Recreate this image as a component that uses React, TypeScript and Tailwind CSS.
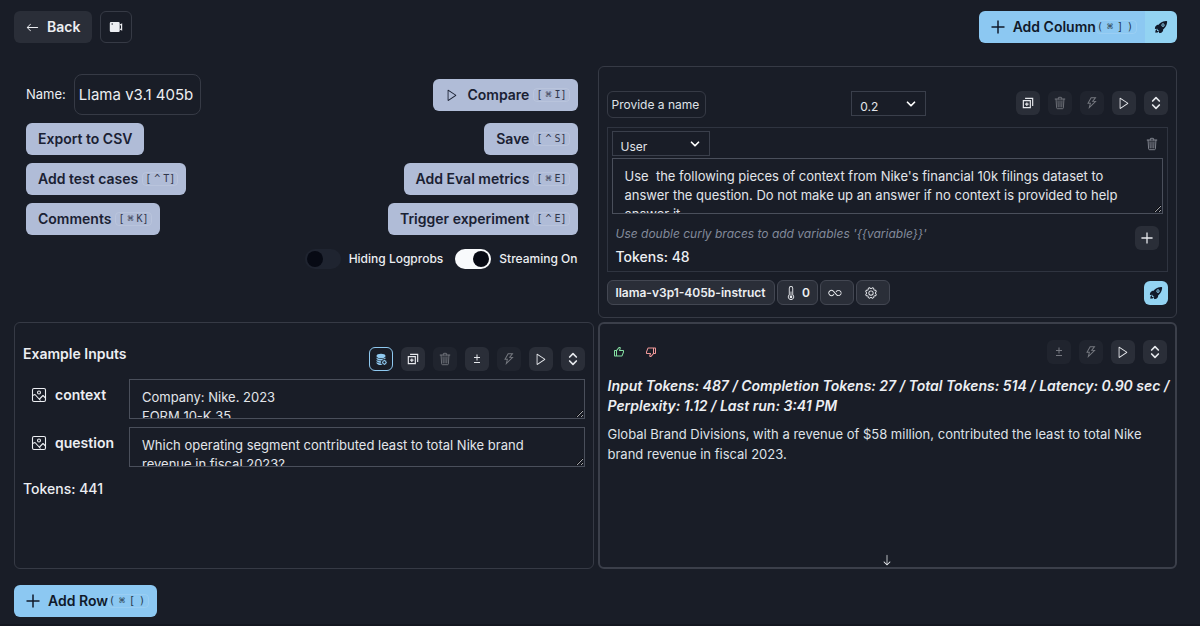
import { ReactNode } from "react";
import clsx from "clsx";

import { AiOutlineThunderbolt } from "react-icons/ai";
import { BiDislike, BiLike } from "react-icons/bi";
import { BsArrowDown, BsArrowLeft, BsDatabaseFillGear, BsThermometerHalf } from "react-icons/bs";
import { CgDuplicate } from "react-icons/cg";
import { IoRocket, IoTrashOutline } from "react-icons/io5";
import { LuChevronDown, LuChevronsUpDown } from "react-icons/lu";
import { PiGear, PiInfinity } from "react-icons/pi";
import { VscPlay } from "react-icons/vsc";

interface KbdProps {
  mod: string;
  char: string;
  parens?: boolean;
}

function Kbd({ mod, char, parens }: KbdProps) {
  return (
    <kbd
      className={clsx(
        "flex items-center rounded-sm border border-white/15 font-['DejaVu_Sans_Mono',monospace] text-[10px] leading-3 font-normal opacity-85",
        parens ? "gap-1 pr-[3px]" : "px-[2px]",
      )}
    >
      <span>{parens ? "(" : "["}</span>
      <span className={parens ? undefined : "mx-[3px]"}>{mod}</span>
      <span>{char}</span>
      <span>{parens ? ")" : "]"}</span>
    </kbd>
  );
}

interface ActionButtonProps {
  children: ReactNode;
  mod?: string;
  char?: string;
}

function ActionButton({ children, mod, char }: ActionButtonProps) {
  return (
    <button
      className={clsx(
        "flex h-8 items-center gap-1 rounded-md bg-[#b0bcd7] text-sm font-semibold text-[#1a2133]",
        mod ? "pr-2 pl-3" : "px-3",
      )}
    >
      {children}
      {mod && char && <Kbd mod={mod} char={char} />}
    </button>
  );
}

interface IconButtonProps {
  label: string;
  children: ReactNode;
  disabled?: boolean;
  className?: string;
}

function IconButton({ label, children, disabled, className }: IconButtonProps) {
  return (
    <button
      aria-label={label}
      disabled={disabled}
      className={clsx(
        "flex size-6 shrink-0 items-center justify-center rounded-md text-sm",
        className ?? "bg-[#2a2e38] text-[#e6e8ec] disabled:opacity-45",
      )}
    >
      {children}
    </button>
  );
}

function PlusIcon({ className }: { className: string }) {
  return (
    <svg viewBox="0 0 14 14" className={className} fill="none" stroke="currentColor" strokeWidth="1.5">
      <path d="M7 .5v13M.5 7h13" />
    </svg>
  );
}

function PlusMinus() {
  return (
    <svg viewBox="0 0 12 12" className="size-3" fill="none" stroke="currentColor">
      <path d="M3 4.5h6M6 1.5v6M3 9.5h6" />
    </svg>
  );
}

function TrashIcon() {
  return <IoTrashOutline className="size-[14px] fill-current/30" />;
}

function ImageIcon() {
  return (
    <svg viewBox="0 0 16 16" className="size-4 shrink-0" fill="none" stroke="currentColor" strokeWidth="1.1" strokeLinejoin="round">
      <rect x="1.5" y="1.5" width="13" height="13" rx="1.5" />
      <circle cx="8" cy="5.5" r="1.5" />
      <path d="M1.5 8.5 4 7.5 9.5 13.5M8.5 12 12 8.5l2.5 2.5" />
    </svg>
  );
}

function VideoIcon() {
  return (
    <svg viewBox="0 0 14 12" className="h-3 w-3.5" fill="currentColor">
      <path
        fillRule="evenodd"
        d="M2 1h7.5a1.2 1.2 0 0 1 1.2 1.2v7.6A1.2 1.2 0 0 1 9.5 11H2A1.2 1.2 0 0 1 .8 9.8V2.2A1.2 1.2 0 0 1 2 1Zm.5 1.6v1H4v-1Z"
      />
      <path d="m11 4 1.6-.8v5.6L11 8" fill="none" stroke="currentColor" strokeWidth="1.2" />
    </svg>
  );
}

interface SelectProps {
  label: string;
  value: string;
  className: string;
}

function Select({ label, value, className }: SelectProps) {
  return (
    <div className={clsx("relative", className)}>
      <select
        aria-label={label}
        className="block h-[25px] w-full appearance-none border border-[#3a3f4b] bg-transparent pt-[6px] pl-2 text-xs text-[#e2e5ea]"
      >
        <option>{value}</option>
      </select>
      <LuChevronDown className="pointer-events-none absolute top-[6px] right-2 size-[14px] stroke-3 text-white" />
    </div>
  );
}

interface ToggleProps {
  label: string;
  defaultChecked?: boolean;
}

function Toggle({ label, defaultChecked }: ToggleProps) {
  return (
    <label className="flex items-center gap-2 text-xs font-medium text-[#eceef2]">
      <input
        type="checkbox"
        role="switch"
        defaultChecked={defaultChecked}
        className="flex h-5 w-9 appearance-none items-center rounded-full bg-[#1f2430] p-[2px] before:size-4 before:rounded-full before:bg-[#070a14] checked:justify-end checked:bg-[#f8fafc]"
      />
      {label}
    </label>
  );
}

const fieldClass =
  "block w-full resize-y overflow-hidden border border-[#4a4f5b] bg-transparent px-3 py-2 text-[13px] leading-[19px] text-[#e2e5ea]";

const inputs = [
  { name: "context", value: "Company: Nike. 2023\nFORM 10-K 35" },
  {
    name: "question",
    value: "Which operating segment contributed least to total Nike brand revenue in fiscal 2023?",
  },
];

function Controls() {
  return (
    <section className="flex flex-col gap-2 py-2 pr-4 pl-3">
      <div className="flex items-center justify-between">
        <label className="flex items-center gap-2 text-[13px]">
          Name:
          <input
            defaultValue="Llama v3.1 405b"
            className="h-[41px] w-[127px] rounded-lg border border-[#363a45] bg-transparent px-1 text-[15px]"
          />
        </label>
        <ActionButton mod="⌘" char="I">
          <VscPlay className="mr-1 size-[14px]" />
          Compare
        </ActionButton>
      </div>
      <div className="flex justify-between">
        <ActionButton>Export to CSV</ActionButton>
        <ActionButton mod="^" char="S">Save</ActionButton>
      </div>
      <div className="flex justify-between">
        <ActionButton mod="^" char="T">Add test cases</ActionButton>
        <ActionButton mod="⌘" char="E">Add Eval metrics</ActionButton>
      </div>
      <div className="flex justify-between">
        <ActionButton mod="⌘" char="K">Comments</ActionButton>
        <ActionButton mod="^" char="E">Trigger experiment</ActionButton>
      </div>
      <div className="flex justify-end gap-3 pt-[6px]">
        <Toggle label="Hiding Logprobs" />
        <Toggle label="Streaming On" defaultChecked />
      </div>
    </section>
  );
}

function PromptPanel() {
  const chip =
    "flex h-[25px] items-center justify-center gap-1 rounded-md border border-[#434752] bg-[#2a2e38] text-xs font-semibold";

  return (
    <section className="rounded-md border border-[#363a45] px-2 pt-6 pb-3">
      <div className="flex items-start justify-between">
        <input
          aria-label="Column name"
          placeholder="Provide a name"
          className="h-[27px] w-[99px] rounded-md border border-[#363a45] bg-transparent px-1 text-xs placeholder:text-[#dfe2e7]"
        />
        <Select label="Temperature" value="0.2" className="ml-14 w-[75px]" />
        <div className="flex gap-2">
          <IconButton label="Duplicate column">
            <CgDuplicate />
          </IconButton>
          <IconButton label="Delete column" disabled>
            <TrashIcon />
          </IconButton>
          <IconButton label="Run missing" disabled>
            <AiOutlineThunderbolt />
          </IconButton>
          <IconButton label="Run column">
            <VscPlay />
          </IconButton>
          <IconButton label="Expand column">
            <LuChevronsUpDown className="size-4 stroke-[2.5]" />
          </IconButton>
        </div>
      </div>

      <div className="mt-[9px] border border-[#2f3440] px-1 py-[3px]">
        <div className="flex items-center justify-between">
          <Select label="Role" value="User" className="w-[98px]" />
          <button aria-label="Delete message" className="pr-1 text-[#8b8f99]">
            <TrashIcon />
          </button>
        </div>
        <textarea
          aria-label="Message"
          defaultValue="Use  the following pieces of context from Nike's financial 10k filings dataset to answer the question. Do not make up an answer if no context is provided to help answer it."
          className={clsx(fieldClass, "mt-[2px] h-[56px]")}
        />
        <div className="flex items-start justify-between px-1 pt-2">
          <div>
            <p className="text-xs leading-[23px] text-[#828a9a] italic">
              Use double curly braces to add variables '{"{{variable}}"}'
            </p>
            <p className="text-sm leading-[23px] font-medium">Tokens: 48</p>
          </div>
          <div className="pt-1">
            <IconButton label="Add message">
              <PlusIcon className="size-3" />
            </IconButton>
          </div>
        </div>
      </div>

      <div className="mt-2 flex items-center gap-[2px]">
        <button className={clsx(chip, "px-2")}>llama-v3p1-405b-instruct</button>
        <button aria-label="Temperature 0" className={clsx(chip, "w-[41px]")}>
          <BsThermometerHalf className="size-[14px]" />
          <span>0</span>
        </button>
        <button aria-label="Max tokens" className={clsx(chip, "w-[34px] pr-1")}>
          <PiInfinity className="size-[14px]" />
        </button>
        <button aria-label="Model settings" className={clsx(chip, "w-[34px] pr-1")}>
          <PiGear className="size-[14px]" />
        </button>
        <div className="ml-auto">
          <IconButton label="Deploy" className="bg-[#93d3f2] text-[#10192a]">
            <IoRocket />
          </IconButton>
        </div>
      </div>
    </section>
  );
}

function ExampleInputs() {
  return (
    <section className="rounded-md border border-[#363a45] px-2 pt-6">
      <div className="flex items-start justify-between">
        <h2 className="text-sm leading-[14px] font-semibold">Example Inputs</h2>
        <div className="flex gap-2">
          <IconButton label="Dataset" className="border border-[#8fc9f0] text-[#8fc9f0]">
            <BsDatabaseFillGear className="size-3" />
          </IconButton>
          <IconButton label="Duplicate row">
            <CgDuplicate />
          </IconButton>
          <IconButton label="Delete row" disabled>
            <TrashIcon />
          </IconButton>
          <IconButton label="Compare output">
            <PlusMinus />
          </IconButton>
          <IconButton label="Run missing" disabled>
            <AiOutlineThunderbolt />
          </IconButton>
          <IconButton label="Run row">
            <VscPlay />
          </IconButton>
          <IconButton label="Expand row">
            <LuChevronsUpDown className="size-4 stroke-[2.5]" />
          </IconButton>
        </div>
      </div>

      <div className="mt-2 flex flex-col gap-2">
        {inputs.map((input) => (
          <div key={input.name} className="flex">
            <label htmlFor={input.name} className="flex h-8 w-[106px] shrink-0 items-center gap-2 pl-2 text-sm font-semibold">
              <ImageIcon />
              {input.name}
            </label>
            <textarea id={input.name} defaultValue={input.value} className={clsx(fieldClass, "h-10")} />
          </div>
        ))}
      </div>
      <p className="mt-3 text-sm font-medium">Tokens: 441</p>
    </section>
  );
}

function OutputPanel() {
  return (
    <section className="flex flex-col rounded-md border-2 border-[#3b3f4a] px-2 pt-4">
      <div className="flex items-center justify-between">
        <div className="flex gap-5 px-[5px] text-xs">
          <button aria-label="Good answer" className="text-[#86e0a3]">
            <BiLike />
          </button>
          <button aria-label="Bad answer" className="text-[#f29a9a]">
            <BiDislike />
          </button>
        </div>
        <div className="flex gap-2">
          <IconButton label="Compare output" disabled>
            <PlusMinus />
          </IconButton>
          <IconButton label="Run missing" disabled>
            <AiOutlineThunderbolt />
          </IconButton>
          <IconButton label="Run cell">
            <VscPlay />
          </IconButton>
          <IconButton label="Expand cell">
            <LuChevronsUpDown className="size-4 stroke-[2.5]" />
          </IconButton>
        </div>
      </div>
      <p className="mt-3 -mr-2 text-sm font-semibold italic">
        Input Tokens: 487 / Completion Tokens: 27 / Total Tokens: 514 / Latency: 0.90 sec / Perplexity: 1.12 / Last run: 3:41 PM
      </p>
      <p className="mt-2 text-[13px] leading-5 text-[#dfe2e7]">
        Global Brand Divisions, with a revenue of $58 million, contributed the least to total Nike brand revenue in fiscal 2023.
      </p>
      <BsArrowDown className="mt-auto mb-[1px] size-3 self-center" />
    </section>
  );
}

export default function App() {
  return (
    <main className="min-h-screen border-b-2 border-[#141720] bg-[#191d27] pt-[11px] pr-[23px] pl-[14px] font-['Inter',sans-serif] text-[#eceef2] scheme-dark">
      <header className="flex justify-between">
        <div className="flex gap-2">
          <button className="flex h-8 items-center gap-2 rounded-md bg-[#2a2e38] px-3 text-sm font-semibold">
            <BsArrowLeft className="size-[13px]" />
            Back
          </button>
          <button aria-label="Watch demo" className="flex size-8 items-center justify-center rounded-md border border-[#363a45]">
            <VideoIcon />
          </button>
        </div>
        <div className="flex h-8 overflow-hidden rounded-md text-[#10192a]">
          <button className="flex items-center bg-[#8cc8f2] pr-2 pl-3 text-sm font-semibold">
            <PlusIcon className="mr-2 size-[14px]" />
            Add Column
            <Kbd mod="⌘" char="]" parens />
          </button>
          <button aria-label="Deploy" className="flex w-8 items-center justify-center bg-[#93d3f2]">
            <IoRocket className="size-[14px]" />
          </button>
        </div>
      </header>

      <div className="mt-[23px] grid grid-cols-2 grid-rows-[252px_247px] gap-[4px]">
        <Controls />
        <PromptPanel />
        <ExampleInputs />
        <OutputPanel />
      </div>

      <button className="mt-4 flex h-8 items-center rounded-md bg-[#8cc8f2] pr-2 pl-3 text-sm font-semibold text-[#10192a]">
        <PlusIcon className="mr-2 size-[14px]" />
        Add Row
        <Kbd mod="⌘" char="[" parens />
      </button>
    </main>
  );
}
